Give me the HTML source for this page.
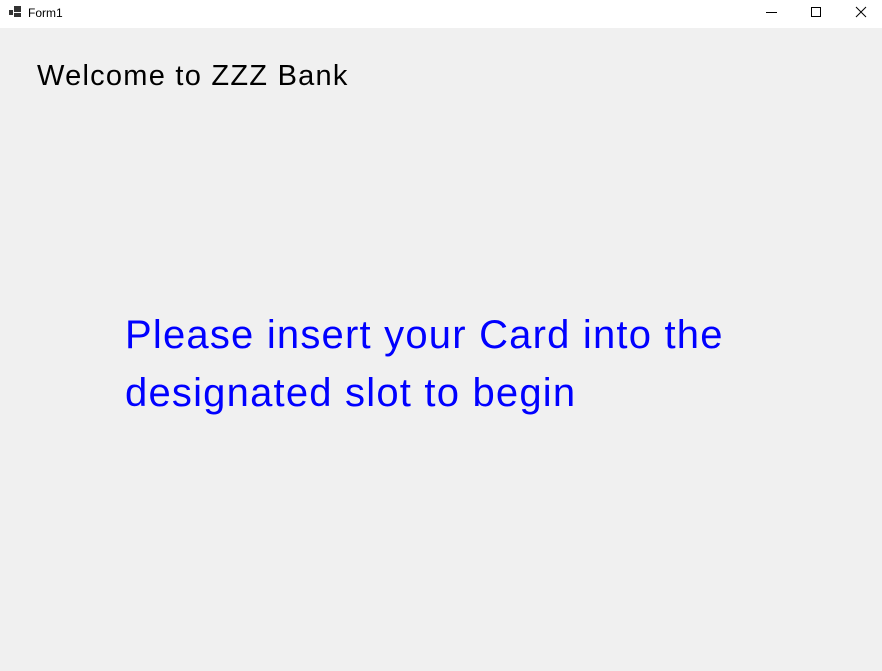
<!DOCTYPE html>
<html><head><style>
html,body{margin:0;padding:0;width:882px;height:671px;overflow:hidden;background:#f0f0f0;font-family:"Liberation Sans",sans-serif}
.tb{position:absolute;left:0;top:0;width:882px;height:28px;background:#fff}
.t{position:absolute;left:28px;top:6px;font-size:12px;color:#000}
.w{position:absolute;left:37px;top:60px;font-size:29px;letter-spacing:1.25px;color:#000;white-space:nowrap}
.b{position:absolute;left:125px;top:306px;font-size:40px;line-height:58px;letter-spacing:1.2px;color:#0000ff;white-space:nowrap}
</style></head><body>
<div class="tb">
<svg width="14" height="14" style="position:absolute;left:9px;top:6px"><rect x="0" y="4" width="4" height="5" fill="#333"/><rect x="5" y="0" width="7" height="6" fill="#333"/><rect x="5" y="7" width="7" height="4" fill="#333"/></svg>
<div class="t">Form1</div>
<svg width="140" height="28" style="position:absolute;left:742px;top:0"><line x1="24" y1="12.5" x2="35" y2="12.5" stroke="#000"/><rect x="69.5" y="7.5" width="9" height="9" fill="none" stroke="#000"/><path d="M114 7L124 17M124 7L114 17" stroke="#000"/></svg>
</div>
<div class="w">Welcome to ZZZ Bank</div>
<div class="b">Please insert your Card into the<br>designated slot to begin</div>
</body></html>
